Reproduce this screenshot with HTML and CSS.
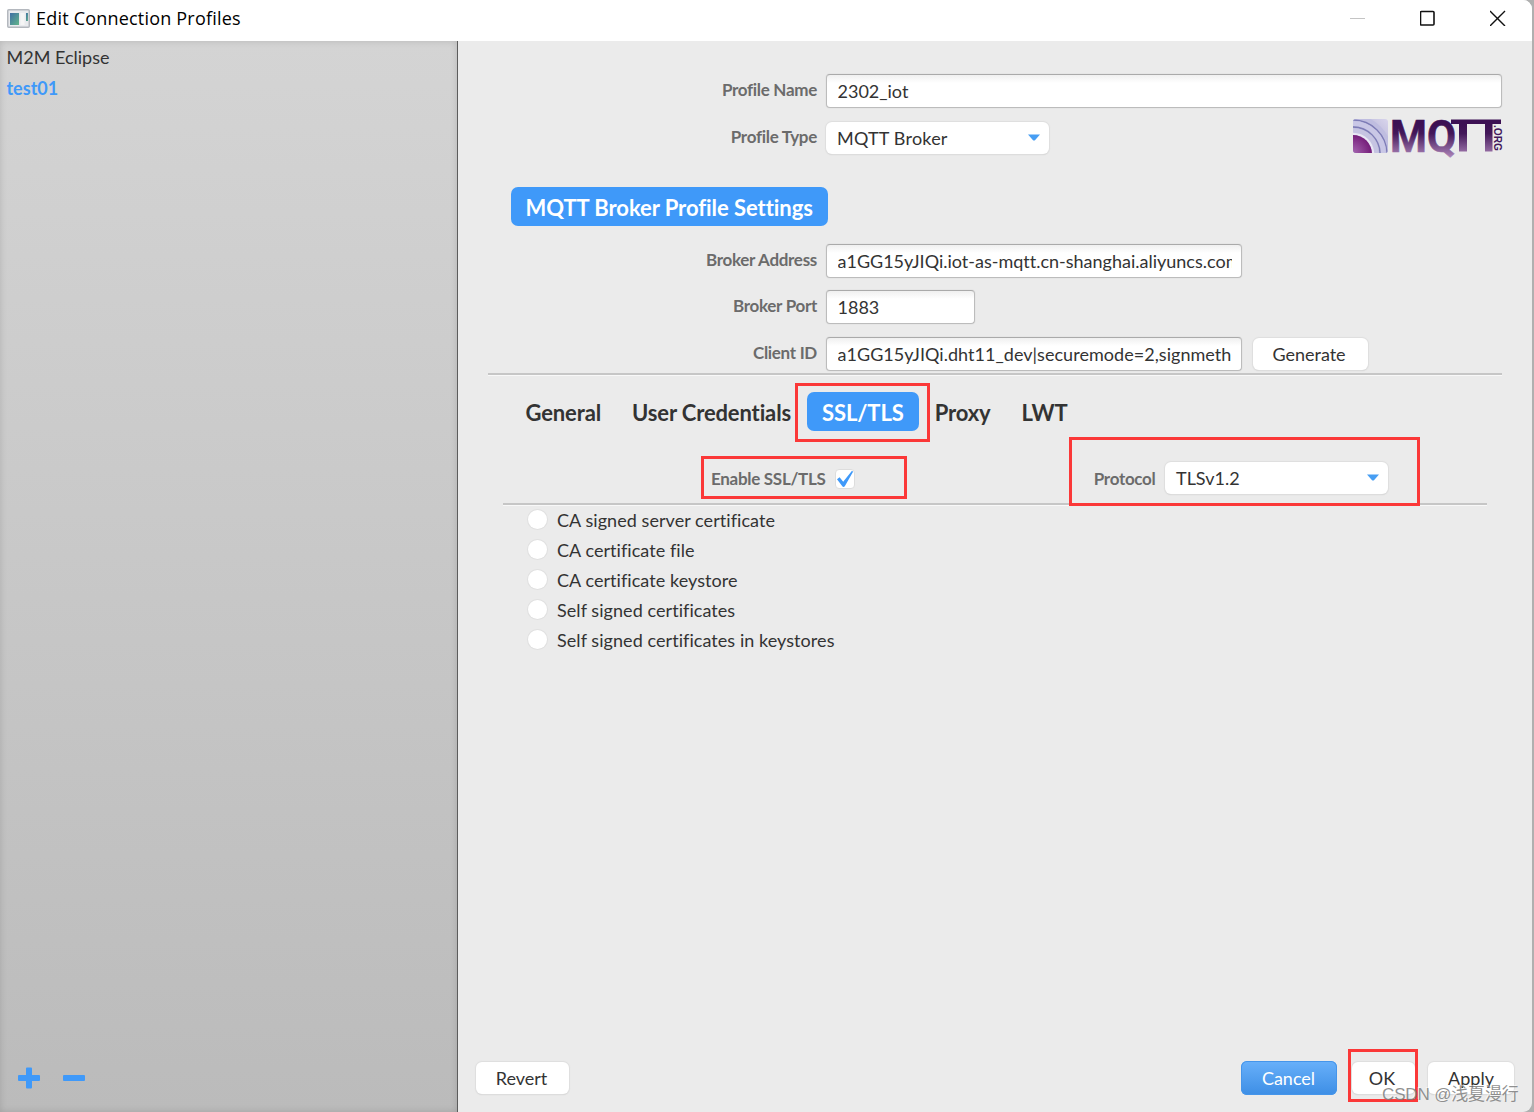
FILE: index.html
```html
<!DOCTYPE html>
<html lang="en">
<head>
    <meta charset="UTF-8">
    <title>Edit Connection Profiles</title>
    <link rel="stylesheet" href="styles.css">
</head>
<body>
    <div class="window">
        <header class="titlebar">
            <svg class="app-icon" width="23" height="19" viewBox="0 0 23 19">
                <defs>
                    <linearGradient id="pane" x1="0" y1="0" x2="1" y2="1">
                        <stop offset="0" stop-color="#3f6fa5"/>
                        <stop offset="1" stop-color="#62b58a"/>
                    </linearGradient>
                </defs>
                <rect x="0.75" y="0.75" width="21.5" height="17.5" rx="1" fill="#e9ebee" stroke="#b4b8be" stroke-width="1.5"/>
                <rect x="3" y="4" width="9" height="12" fill="url(#pane)"/>
                <rect x="13.5" y="4" width="4" height="12" fill="#f5f5f5"/>
                <rect x="19" y="4" width="2" height="8" fill="url(#pane)"/>
            </svg>
            <span class="window-title">Edit Connection Profiles</span>
            <div class="window-controls">
                <svg width="16" height="16" viewBox="0 0 16 16"><path d="M0 8.5H15" stroke="#c4c4c4"/></svg>
                <svg width="16" height="16" viewBox="0 0 16 16"><rect x="0.500" y="1.500" width="13.5" height="13.5" rx="1" fill="none" stroke="#111" stroke-width="1.6"/></svg>
                <svg width="16" height="16" viewBox="0 0 16 16"><path d="M0 1L15 16M15 1L0 16" stroke="#111" stroke-width="1.4"/></svg>
            </div>
        </header>

        <div class="content">
            <aside class="sidebar">
                <ul class="profile-list">
                    <li>M2M Eclipse</li>
                    <li class="selected">test01</li>
                </ul>
                <div class="list-actions">
                    <svg width="22" height="22" viewBox="0 0 22 22"><path d="M9 0.500h4q1 0 1 1V8h7q1 0 1 1v4q0 1-1 1h-7v6.500q0 1-1 1H9q-1 0-1-1V14H1q-1 0-1-1V9q0-1 1-1h7V1.500q0-1 1-1z" fill="#3f99f9"/></svg>
                    <svg width="22" height="22" viewBox="0 0 22 22"><rect y="8" width="22" height="6" rx="1" fill="#3f99f9"/></svg>
                </div>
            </aside>

            <main class="editor">
                <div class="row">
                    <label for="name">Profile Name</label>
                    <input class="wide" type="text" id="name" value="2302_iot">
                </div>
                <div class="row">
                    <label>Profile Type</label>
                    <div class="combo broker"><span>MQTT Broker</span><svg width="12" height="7" viewBox="0 0 12 7"><path d="M0 0.500H12L7 6.200Q6 7 5 6.200z" fill="#479ef3"/></svg></div>
                    <svg class="mqtt-logo" width="149" height="38" viewBox="0 0 149 38">
                        <defs>
                            <linearGradient id="rings" x1="0" y1="1" x2="1" y2="0">
                                <stop offset="0" stop-color="#9494c4"/>
                                <stop offset="1" stop-color="#d9d5ec"/>
                            </linearGradient>
                            <radialGradient id="core" gradientUnits="userSpaceOnUse" cx="0" cy="35" r="19">
                                <stop offset="0" stop-color="#a566b0"/>
                                <stop offset="1" stop-color="#741b78"/>
                            </radialGradient>
                            <linearGradient id="letters" gradientUnits="userSpaceOnUse" x1="0" y1="6" x2="0" y2="38">
                                <stop offset="0" stop-color="#3c1053"/>
                                <stop offset="0.3" stop-color="#431859"/>
                                <stop offset="1" stop-color="#a77fb4"/>
                            </linearGradient>
                            <clipPath id="tile"><rect y="1" width="35" height="34" rx="3"/></clipPath>
                        </defs>
                        <g clip-path="url(#tile)">
                            <rect y="1" width="35" height="34" fill="url(#rings)"/>
                            <g fill="none">
                                <circle cx="0" cy="36" r="36" stroke="#bfbde0" stroke-width="6"/>
                                <circle cx="0" cy="36" r="34" stroke="#7d7cb6" stroke-width="1.3"/>
                                <circle cx="0" cy="36" r="30.500" stroke="#c9c7e6" stroke-width="5"/>
                                <circle cx="0" cy="36" r="27" stroke="#7d7cb6" stroke-width="1.300"/>
                                <circle cx="0" cy="36" r="23.500" stroke="#c6c4e2" stroke-width="5"/>
                                <circle cx="0" cy="36" r="20" stroke="#e9e7f5" stroke-width="2.500"/>
                            </g>
                            <circle cx="0" cy="36" r="19" fill="url(#core)"/>
                        </g>
                        <g class="logo-text" fill="url(#letters)" stroke="url(#letters)">
                            <text x="37" y="33.500" textLength="66" lengthAdjust="spacingAndGlyphs">MQ</text>
                            <path d="M98 1.500H148V6H139.500V33.500H132V6H114V33.500H106V6H98z" stroke="none"/>
                        </g>
                        <text class="logo-org" transform="translate(140.500 7) rotate(90)" textLength="26" lengthAdjust="spacingAndGlyphs">.ORG</text>
                    </svg>
                </div>

                <div class="settings-head"><span class="tab active">MQTT Broker Profile Settings</span></div>

                <div class="row">
                    <label for="address">Broker Address</label>
                    <input class="medium" type="text" id="address" value="a1GG15yJIQi.iot-as-mqtt.cn-shanghai.aliyuncs.com">
                </div>
                <div class="row">
                    <label for="port">Broker Port</label>
                    <input class="short" type="text" id="port" value="1883">
                </div>
                <div class="row">
                    <label for="client">Client ID</label>
                    <input class="medium client" type="text" id="client" value="a1GG15yJIQi.dht11_dev|securemode=2,signmeth">
                    <button class="generate">Generate</button>
                </div>
                <hr class="line">

                <nav class="tabs">
                    <span class="tab">General</span>
                    <span class="tab">User Credentials</span>
                    <span class="tab active">SSL/TLS</span>
                    <span class="tab">Proxy</span>
                    <span class="tab">LWT</span>
                </nav>

                <div class="ssl-row">
                    <label>Enable SSL/TLS</label>
                    <span class="checkbox"><svg width="18" height="18" viewBox="0 0 18 18"><path d="M1 9.200L3.600 7.300L7.200 11.800L15.800 1L17.200 1.600L8.800 16.200Q7.500 17.800 6.300 16.200z" fill="#3f99f9"/></svg></span>
                    <label class="protocol-label">Protocol</label>
                    <div class="combo"><span>TLSv1.2</span><svg width="12" height="7" viewBox="0 0 12 7"><path d="M0 0.500H12L7 6.200Q6 7 5 6.200z" fill="#479ef3"/></svg></div>
                </div>
                <hr class="line inner">

                <ul class="options">
                    <li><i></i><span>CA signed server certificate</span></li>
                    <li><i></i><span>CA certificate file</span></li>
                    <li><i></i><span>CA certificate keystore</span></li>
                    <li><i></i><span>Self signed certificates</span></li>
                    <li><i></i><span>Self signed certificates in keystores</span></li>
                </ul>

                <footer class="buttons">
                    <button class="revert">Revert</button>
                    <button class="cancel">Cancel</button>
                    <button class="ok">OK</button>
                    <button class="apply">Apply</button>
                </footer>
            </main>
        </div>
    </div>

    <div class="mark mark-tab"></div>
    <div class="mark mark-enable"></div>
    <div class="mark mark-protocol"></div>
    <div class="mark mark-ok"></div>
    <div class="watermark">CSDN @浅夏漫行</div>
</body>
</html>
```
FILE: styles.css
```css
* {
    box-sizing: border-box;
}

body {
    margin: 0;
    height: 1112px;
    overflow: hidden;
    background: #b0b0b0;
    font-family: Lato, "Liberation Sans", sans-serif;
    font-size: 18px;
    font-variant-ligatures: none;
    color: #333;
}

ul {
    list-style: none;
    margin: 0;
    padding: 0;
}

.window {
    width: 1532px;
    height: 1112px;
    display: flex;
    flex-direction: column;
    background: #ebebeb;
    border-radius: 0 9px 9px 0;
    overflow: hidden;
}

.titlebar {
    height: 41px;
    flex: none;
    display: flex;
    align-items: center;
    padding: 0 26px 5px 7px;
    background: #fff;
}

.window-title {
    margin-left: 6px;
    font-family: "Open Sans", "Noto Sans", sans-serif;
    font-size: 18px;
    letter-spacing: 0.2px;
    color: #000;
}

.window-controls {
    display: flex;
    gap: 54px;
    margin-left: auto;
}

.content {
    flex: 1;
    display: flex;
}

.sidebar {
    width: 458px;
    display: flex;
    flex-direction: column;
    justify-content: space-between;
    padding: 1px 0 23px 6.5px;
    border-right: 1px solid #5c5c5c;
    background: linear-gradient(#d4d4d4, #bbb);
    box-shadow: inset 0 0 7px rgba(0, 0, 0, 0.14);
}

.profile-list li {
    height: 31px;
    line-height: 31px;
}

.profile-list .selected {
    color: #3f99f9;
    font-weight: bold;
}

.list-actions {
    display: flex;
    gap: 23px;
    padding-left: 11.5px;
}

.editor {
    flex: 1;
    display: flex;
    flex-direction: column;
    padding: 33px 18px 18px 18px;
}

.row {
    display: flex;
    align-items: center;
    height: 34px;
    margin-bottom: 12.5px;
    flex: none;
}

label {
    width: 341px;
    padding-bottom: 3px;
    margin-right: 9px;
    text-align: right;
    white-space: nowrap;
    font-size: 17px;
    font-weight: bold;
    letter-spacing: -0.3px;
    color: #6b6b6b;
}

input {
    height: 34px;
    padding: 0 9px 0 10.5px;
    border: 1px solid #bcbcbc;
    border-top-color: #aaa;
    border-radius: 4px;
    background: linear-gradient(#f0f0f0, #fff 8px);
    box-shadow: 0 0 1px #bbb;
    font: inherit;
    font-variant-ligatures: none;
    color: #333;
}

.wide {
    width: 676px;
}

.medium {
    width: 416px;
}

.client {
    letter-spacing: 0.04px;
}

.short {
    width: 149px;
    padding-bottom: 1px;
}

.combo {
    width: 223px;
    height: 32px;
    display: flex;
    align-items: center;
    justify-content: space-between;
    padding: 0 9px 0 11px;
    border-radius: 6px;
    background: #fff;
    box-shadow: 0 0 1px 1px #dedede, 0 1px 1px #ccc;
}

.combo.broker {
    letter-spacing: 0.2px;
}

.mqtt-logo {
    margin: -1px 12px 0 auto;
    overflow: visible;
}

.logo-text {
    font: bold 44.5px Roboto, "Liberation Sans", sans-serif;
    stroke-width: 0.6;
}

.logo-org {
    font: bold 11px "Liberation Sans", sans-serif;
    fill: #43185c;
}

.settings-head {
    margin: 19.5px 0 18px 34.5px;
    display: flex;
}

.settings-head .tab {
    letter-spacing: -0.06px;
}

.tab {
    height: 39px;
    padding: 0 15px;
    border-radius: 7px;
    font-size: 22px;
    font-weight: bold;
    line-height: 41px;
    letter-spacing: -0.13px;
    white-space: nowrap;
}

.tab.active {
    color: #fff;
    background: #3f99f9;
}

.line {
    width: 1014px;
    height: 3px;
    flex: none;
    margin: -10.5px 0 0 12px;
    border: 0;
    border-top: 2px solid #c6c6c6;
    border-bottom: 1px solid #f8f8f8;
}

.tabs {
    display: flex;
    gap: 1px;
    margin: 16px 0 0 34.5px;
}

.ssl-row {
    display: flex;
    align-items: center;
    height: 34px;
    margin-top: 30px;
}

.ssl-row label {
    width: 349.5px;
    padding-bottom: 0;
    padding-top: 1px;
}

.checkbox {
    width: 20px;
    height: 20px;
    display: flex;
    align-items: center;
    justify-content: center;
    margin-top: 2px;
    border: 1px solid #ddd;
    border-radius: 4px;
    background: #fff;
}

.ssl-row .protocol-label {
    width: 301px;
    margin-right: 9.5px;
}

.line.inner {
    width: 984px;
    margin: 8px 0 0 27px;
}

.options {
    margin: -1px 0 0 52px;
}

.options li {
    height: 30px;
    display: flex;
    align-items: center;
    gap: 10px;
    letter-spacing: 0.06px;
}

.options i {
    width: 19px;
    height: 19px;
    margin-bottom: 1px;
    border-radius: 50%;
    background: #fff;
    box-shadow: 0 0 0 1px #e0e0e0;
}

.options span {
    padding-top: 1px;
}

button {
    height: 32px;
    padding: 0 2px 0 0;
    border: 0;
    border-radius: 6px;
    background: #fff;
    box-shadow: 0 0 1px 1px #dedede, 0 1px 1px #ccc;
    font: inherit;
    color: #333;
}

.generate {
    width: 115px;
    margin-left: 10.5px;
}

.buttons {
    display: flex;
    margin-top: auto;
}

.revert {
    width: 93px;
}

.cancel {
    width: 96px;
    height: 34px;
    padding-right: 1px;
    margin: -1px 15px -1px auto;
    color: #fff;
    background: linear-gradient(#68b0fa, #3d8ee5);
    box-shadow: inset 0 0 0 1px #4595ea;
}

.ok {
    width: 63px;
    padding-right: 3px;
    margin-right: 13px;
}

.apply {
    width: 86px;
    padding-right: 0;
}

/* highlight frames drawn over the dialog */
.mark {
    position: absolute;
    border: 3px solid #fb3838;
}

.mark-tab {
    left: 795px;
    top: 383px;
    width: 135px;
    height: 59px;
}

.mark-enable {
    left: 701px;
    top: 456px;
    width: 206px;
    height: 43px;
}

.mark-protocol {
    left: 1069px;
    top: 437px;
    width: 351px;
    height: 69px;
}

.mark-ok {
    left: 1348px;
    top: 1049px;
    width: 70px;
    height: 53px;
}

.watermark {
    position: absolute;
    left: 1382px;
    top: 1082px;
    font: 17px/26px "Liberation Sans", "Noto Sans CJK SC", sans-serif;
    letter-spacing: -0.15px;
    white-space: nowrap;
    color: rgba(125, 125, 125, 0.85);
    text-shadow: -1px -1px 0 rgba(255, 255, 255, 0.6);
}
```
